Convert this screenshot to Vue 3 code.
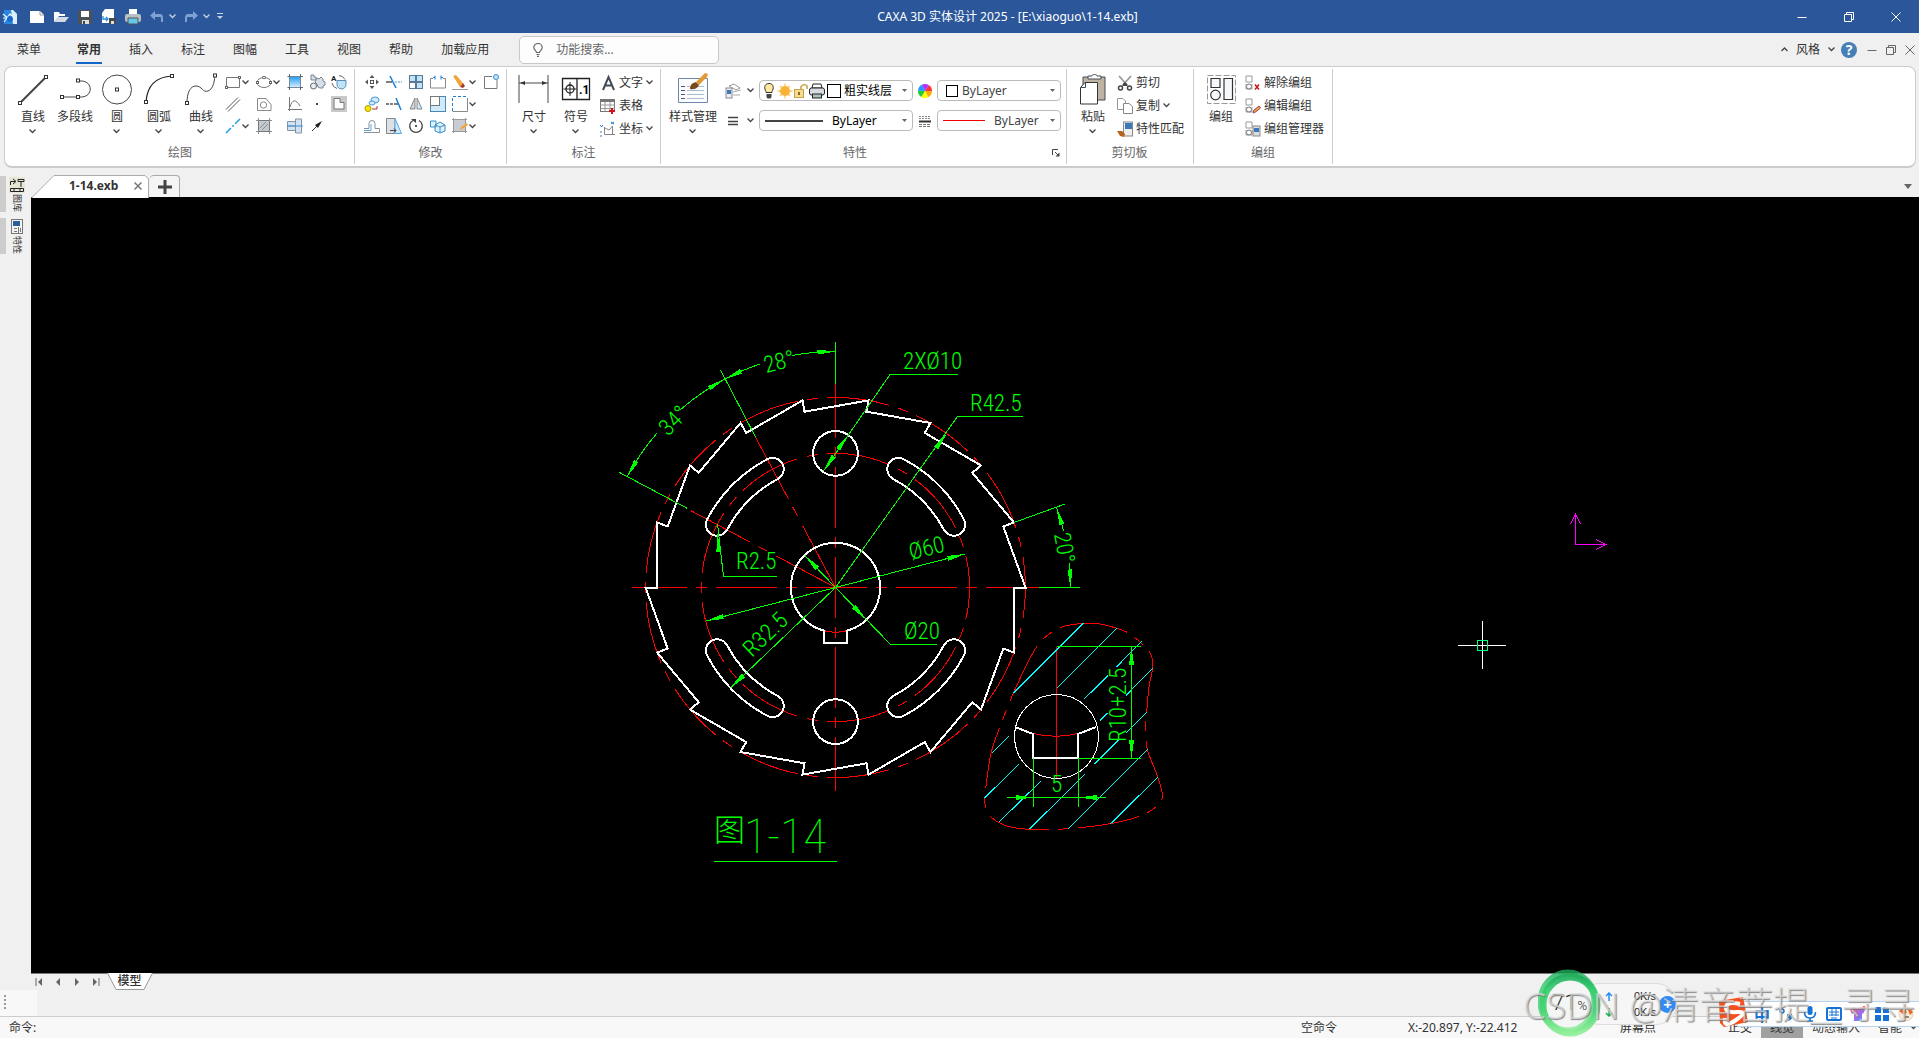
<script setup>
const menuTabs = ['插入', '标注', '图幅', '工具', '视图', '帮助', '加载应用']

const g = '#44474d'
const b = '#1e7fd6'
const sq = (x, y) => `<rect x="${x - 1.5}" y="${y - 1.5}" width="3" height="3" fill="#fff" stroke="#333" stroke-width="1"/>`
const nub = (x, y) => `<rect x="${x - 1}" y="${y - 1}" width="2" height="2" fill="#fff" stroke="#666" stroke-width="1"/>`
const s = (d, c = g, w = 1, f = 'none') => `<path d="${d}" fill="${f}" stroke="${c}" stroke-width="${w}"/>`
const dash = (p, d) => p.replace('/>', ` stroke-dasharray="${d}"/>`)

const big = {
  line: s('M4 30 30 4', '#444', 2) + sq(4, 30) + sq(30, 4),
  pline: s('M4 24H20M20 8H24C35 9 35 23 24 24H20') + sq(4, 24) + sq(20, 24) + sq(20, 7.5),
  circle: '<circle cx="17" cy="16.500" r="14.500" fill="none" stroke="#44474d"/>' + sq(17, 16.5),
  arc: s('M4 29C5 14 13 4 30 3', '#222', 1.2) + sq(4, 29) + sq(30, 3),
  curve: s('M3 30C3 20 6 13 12 13S19 20 24 18 30 10 31 3') + sq(3, 30) + sq(31, 2.5),
  dim: s('M2 2V30M31 2V30M2 10H31') + '<path d="M3 10l5-2v4zM30 10l-5-2v4z" fill="#333"/>',
  symbol: s('M3.500 5.500H30.500V26.500H3.500ZM18 5.500V26.500', '#222', 1.3) + '<circle cx="11" cy="16" r="4" fill="none" stroke="#222" stroke-width="1.3"/>' + s('M11 9V23M4.500 16H17.500', '#222') + '<text x="20" y="21" font-size="12" font-weight="700" font-family="Roboto">.1</text>',
  style: s('M2.500 5.500H31.500V29.500H2.500Z', '#6f87a8', 1, '#fbfcfe') + s('M5 13.500H9M5 17.500H9M5 21.500H9M5 25.500H9', '#557', 1) + s('M11 13.500H14M11 17.500H28M11 21.500H28M11 25.500H28M21 13.500H28', '#a9bccf', 1) + '<path d="M14 16c0-5 3-6 6-7l3 3c-2 4-5 5-9 4z" fill="#7a4a1e"/><path d="M20 9 29 0l3 1-1 3-8 8z" fill="#e39a33"/>',
  paste: '<path d="M7 4H29V27H7z" fill="#bfb3a4" stroke="#444b55"/><path d="M12 6V3h4c0-2 5-2 5 0h4v3z" fill="#fff" stroke="#444b55"/><path d="M9 9.500H21.500V31H4.500V14.500z" fill="#fff" stroke="#333"/>' + s('M9.500 10V14.500H5'),
  group: '<path d="M3.500 2.500H31.500V30.500H3.500Z" fill="none" stroke="#999" stroke-dasharray="6 2"/>' + s('M7 5.500H16V14.500H7ZM20 5.500H28.500V26.500H20Z', '#333', 1.2, '#f6f9fc') + '<circle cx="11.500" cy="22" r="4.800" fill="#f6f9fc" stroke="#333" stroke-width="1.200"/>'
}

const chip = `<path d="M1 1H7V7H1ZM1 9v5H7V9" fill="none" stroke="#999"/><circle cx="4" cy="11.500" r="2.500" fill="#fff" stroke="#777"/>`
const ic = {
  rect: s('M1.500 3.500H14.500V13.500H1.500Z', '#777') + nub(14.5, 3.5) + nub(1.5, 13.5),
  ellipse: '<ellipse cx="8" cy="8.500" rx="7" ry="5" fill="none" stroke="#777"/>' + nub(8, 3.5) + nub(1.5, 8.5) + nub(14.5, 8.5),
  fill: '<defs><linearGradient id="gf" x2="0" y2="1"><stop stop-color="#1f9bf0"/><stop offset="1" stop-color="#d8effd"/></linearGradient></defs><rect x="2.500" y="2.500" width="11" height="11" fill="url(#gf)" stroke="#789"/>' + s('M.5 2.500H3M13 2.500h3M.5 13.500H3M13 13.500h3M2.500 0V3M13.500 0V3M2.500 13v3M13.500 13v3', '#567'),
  gear: '<path d="M2 1h3v2h2v3H2zM8 4l2 1 2-2 2 2v2l2 1v3l-2 1v2h-3l-2-1-1-3-2-2z" fill="#d7e0ea" stroke="#7a8490"/><circle cx="4.500" cy="12" r="3" fill="#e6edf4" stroke="#666"/>',
  atext: '<text x="0" y="7" font-size="8" font-weight="700" font-family="Roboto" fill="#222">A</text><path d="M6 6.500h9v4a4.500 4.500 0 0 1-9 0z" fill="#bfe2f7" stroke="#5a8db5"/>' + s('M8 1.500A7 7 0 0 1 14 5.500M1 9A7 7 0 0 0 6 14.500', '#666'),
  parallel: s('M1 13.500 13 1.500M3 15.500 15 3.500', '#555'),
  hex: s('M1.500 2.500H10L15 8.500V14.500H1.500Z', '#888') + '<circle cx="7.500" cy="9" r="3.200" fill="none" stroke="#888"/>',
  func: s('M2.500 1V15M1 13.500H15M3 11C5 3 9 3 13 10', '#777'),
  dot: '<rect x="7" y="7" width="2" height="2" fill="#444"/>',
  cut: '<rect width="16" height="16" fill="#c9c9c9"/>' + s('M3 2.500H9V6.500H13V13H3Z', '#777', 1, '#fff'),
  cline: dash(s('M1 15 15 1', '#1f9fe0', 1.5), '7 2 2 2'),
  hatch: '<rect x="2.500" y="2.500" width="11" height="11" fill="#c4c9ce" stroke="#777"/>' + s('M0 2.500H3M13 2.500h3M0 13.500H3M13 13.500h3M2.500 0V3M13.500 0V3M2.500 13v3M13.500 13v3M4 10 10 4M6 12 12 6', '#8a8f95'),
  bolt: '<path d="M.5 3.500h8V8h-8zM8.500 1h6v14h-6zM.5 8v4.500h8V8" fill="#cfe3f4" stroke="#8793a0"/>' + s('M0 8H16', '#3b8fd0'),
  leader: s('M3 13 9 7', '#333') + '<path d="M13 3 6 7l3 3z" fill="#222"/>',
  move: '<path d="M8 1 10.500 4h-5zM8 15l2.500-3h-5zM1 8l3-2.500v5zM15 8l-3-2.500v5z" fill="#555"/><rect x="6.500" y="6.500" width="3" height="3" fill="#fff" stroke="#555"/>',
  trim: s('M4 2 10 14', b, 1.5) + s('M0 8H6', '#555', 1.5) + dash(s('M9 8h7', '#7bbce8', 1.5), '2 1'),
  array: '<rect x="1.500" y="1.500" width="6" height="6" fill="#bfe3fb" stroke="#5a7a96"/><rect x="8.500" y="1.500" width="6" height="6" fill="#bfe3fb" stroke="#5a7a96"/><rect x="1.500" y="8.500" width="6" height="6" fill="#fff" stroke="#5a7a96"/><rect x="8.500" y="8.500" width="6" height="6" fill="#bfe3fb" stroke="#5a7a96"/>',
  breakk: s('M3 4.500H.5V14H15.500V4.500H13', '#888') + s('M3 3.500h2M5 1.500v4M11 1.500v4M11 3.500h2', b),
  erase: '<path d="M1 2 4 1l7 8-3 4z" fill="#f0a43a"/><path d="M8 13l3-4 2 3-2 2z" fill="#a33c2e"/>' + s('M0 15.500H16', '#999'),
  corner: s('M9 2.500H1.500V14.500H14V6', '#777') + '<circle cx="13" cy="3" r="2.500" fill="#bfe3fb" stroke="#3a8fd0"/>',
  copy: '<ellipse cx="11" cy="4" rx="4" ry="3" fill="#cfeafc" stroke="#4a9ad0"/><ellipse cx="8" cy="7" rx="3" ry="2" fill="#cfeafc" stroke="#4a9ad0"/><circle cx="4" cy="12.500" r="3" fill="#ffe800" stroke="#a89a00"/>' + s('M8 13H13V10', '#a33', 1),
  extend: s('M0 8H3M4 8h3M8 8h4', '#555', 1.5) + s('M10 2 15 14', b, 1.5),
  mirror: '<path d="M7 2V13H2z" fill="#cfd4d9" stroke="#888"/><path d="M9 2V13h5z" fill="#cfeafc" stroke="#888"/>',
  scale: '<rect x=".5" y=".5" width="15" height="15" fill="#cfeafc" stroke="#4a88b8"/><rect x=".5" y=".5" width="9" height="9" fill="#fff" stroke="#777"/>',
  stretchbox: dash(s('M.5 15V.5H15', b), '3 2') + s('M15.500 2V15.500H.5', '#888'),
  offset: s('M0 14.500H15.500V10.500H11V5.500A3 3 0 0 0 5 5.500V10.500H0', '#8a919a') + s('M0 12.500H7V6', '#5aa7dd'),
  stretch: '<path d="M.5.5H9V15.500H.5z" fill="#dde1e5" stroke="#888"/><path d="M9 .5 15.500 15.500H9z" fill="#cfeafc" stroke="#5aa7dd"/>' + s('M4 12.500h6M8 10.500l2 2-2 2'),
  rotate: s('M5 2.500A6.300 6.300 0 1 0 11 2.500', '#444', 1.3) + '<path d="M3 1h5v4z" fill="#444"/><circle cx="8" cy="8" r="1" fill="#222"/>',
  blocks: '<path d="M.5 3H6V9H.5zM5 7l5-3 5 3v6l-5 2-5-2z" fill="#dff1fd" stroke="#3a8fc8"/>' + s('M5 7l5 2 5-2M10 9v6', '#3a8fc8'),
  hatchEdit: '<rect x="1.500" y="1.500" width="12" height="12" fill="#c9cdd2" stroke="#888"/>' + s('M0 1.500H15M0 13.500H15M1.500 0V15M13.500 0V15', '#999') + '<path d="M9 9l6-4 1 2-6 4-2 1z" fill="#f0a43a"/>',
  A: s('M3 15 8.500 2 14 15M5 10.500H12', '#444b57', 2),
  table: '<rect x=".5" y="1.500" width="14" height="12" fill="#fff" stroke="#777"/><rect x="0" y="1" width="15" height="3" fill="#777"/>' + s('M.5 7H15M.5 10.500H15M5 4V13.500M10 4V13.500', '#999') + s('M9 13h6M12 10v6', '#d0141e', 2),
  coord: s('M4.500 6v7.500H15M12.500 13V5L9 9 5 7', '#888') + s('M0 4l1.500 2L3 4M11 1l3 2M14 1l-3 2M1 10v2M1 14v2', b),
  matchc: '<rect x="6.500" y="1" width="9" height="14" fill="#eee" stroke="#888"/><rect x="8" y="2" width="7" height="6" fill="#3a7ab8"/><path d="M0 10l5 0 3 3-1 3-4-1z" fill="#b5651d"/>',
  scissors: s('M2 1 11 11M14 1 5 11', '#999', 1.8) + '<circle cx="3.500" cy="13" r="2" fill="none" stroke="#444" stroke-width="1.500"/><circle cx="12.500" cy="13" r="2" fill="none" stroke="#444" stroke-width="1.500"/><path d="M6 9l2-2 2 2v2H6z" fill="#444"/>',
  copydoc: s('M.5.5H6L8.500 3V11.500H.5Z', '#999', 1, '#fff') + s('M6.500 5.500H12L15.500 8.500V15.500H6.500Z', '#888', 1, '#fff'),
  ungroup: chip + s('M10 9.500l4 5M14 9.500l-4 5', '#c01818', 1.5),
  editgroup: chip + '<path d="M8 15l1-3 5-4 1.500 2-5 4z" fill="#f0a43a" stroke="#946"/>',
  groupmgr: chip + '<rect x="8" y="5" width="7" height="10" fill="#ddd" stroke="#888"/><rect x="9" y="7" width="5" height="4" fill="#3a7ab8"/>',
  layers: '<path d="M4 3l5-2 6 4-4 2z" fill="#fff" stroke="#999"/>' + s('M8 9l8-2M8 12h7', '#aaa') + '<rect x="1" y="5" width="6" height="10" fill="#eee" stroke="#889"/><rect x="2" y="7" width="4" height="4" fill="#3a7ab8"/>',
  lines: s('M3 4.500H13M3 8.500H13M3 11.500H13', '#444', 1.3),
  weights: dash(s('M2 3.500H14M2 5.500h12', '#888'), '2 1') + s('M2 8.500H14', '#333', 2) + dash(s('M2 11.500H14M2 13.500h12', '#777'), '3 1'),
  wheel: ['#f33', '#fa0', '#ff0', '#2c3', '#29f', '#a3f'].map((c, i) => {
    const p = a => `${(8 + 7 * Math.cos(a)).toFixed(2)} ${(8 + 7 * Math.sin(a)).toFixed(2)}`
    return `<path d="M8 8L${p(i * Math.PI / 3 - 1)}A7 7 0 0 1 ${p((i + 1) * Math.PI / 3 - 1)}Z" fill="${c}"/>`
  }).join(''),
  bulb: '<path d="M8 .500c5 0 5 5 3 8v1H5V8.500C3 5.500 3 .500 8 .500z" fill="#ffe9a0" stroke="#333"/><path d="M5.500 11h5v3l-1 1.500h-3l-1-1.500z" fill="#444"/>',
  sun: s('M8 .5v15M.5 8h15M3 3l10 10M13 3 3 13', '#f7c860', 1.3) + '<circle cx="8" cy="8" r="5" fill="#f9b233"/>',
  lock: s('M8 8V3.500Q11 0 14 3V6', '#d0b060', 1.8) + '<rect x="1.500" y="6.500" width="9" height="8" fill="#f3dc90" stroke="#c8a44a"/><rect x="5" y="9" width="2" height="3" fill="#8a6a20"/>',
  print: '<path d="M4 1h8l1 4H3z" fill="#fff" stroke="#222"/><rect x=".5" y="5" width="15" height="7" rx="2" fill="#d8dce0" stroke="#222"/><rect x="3.500" y="11" width="9" height="4" fill="#a8c0c4" stroke="#222"/>'
}

const quick = {
  app: '<path d="M2 1h9l4 4v10H2z" fill="#2a86e0"/><path d="M9 1h2l4 4v10h-4z" fill="#d9eefb"/>' + s('M1 5l8 7M2 13l6-8 5 5M1 9h10', '#e8f6ff', 1.2) + '<circle cx="8" cy="10" r="3" fill="#1668d0"/>',
  neu: '<path d="M1 2H11L15 6V14H1z" fill="#fff"/>' + s('M11 2V6H15', '#999'),
  open: '<path d="M1 3h5l1 2h5v2H6l-5 6z" fill="#fff"/><path d="M5 8H16l-4 5H1z" fill="#d3dae2"/>',
  save: '<path d="M1 1H15V15H1z" fill="#4c5358"/><path d="M4 2h8v6H4z" fill="#fff"/><path d="M5 11h7v4H5z" fill="#ddd"/><path d="M6 12h2v3H6z" fill="#444"/>',
  saveas: '<path d="M4 0h9v14H1V4z" fill="#fff"/><path d="M8 9h7v6H8z" fill="#444b50"/><path d="M10 12h3v3h-3z" fill="#ddd"/>' + s('M2 7v3h5M5 8l2 2-2 2', '#2b8fd8', 1.3),
  print: '<path d="M4 0h8v5H4z" fill="#fff"/><rect x="0" y="5" width="16" height="8" rx="2" fill="#b9c0c5"/><path d="M3 9h10v6H3z" fill="#62c8ec" stroke="#555"/>',
  undo: '<path d="M1 6.500 6 2v3h5q3 0 3 4v4h-2V9q0-1-1-1H6v3z" fill="#7ea0d3"/>',
  redo: '<path d="M15 6.500 10 2v3H5Q2 5 2 9v4h2V9q0-1 1-1h5v3z" fill="#7ea0d3"/>'
}

const bigDraw = [
  { t: '直线', i: 'line', m: 1 }, { t: '多段线', i: 'pline' }, { t: '圆', i: 'circle', m: 1 },
  { t: '圆弧', i: 'arc', m: 1 }, { t: '曲线', i: 'curve', m: 1 }
]
const smallDraw = [
  ['rect', 1], ['ellipse', 1], ['fill'], ['gear'], ['atext'],
  ['parallel'], ['hex'], ['func'], ['dot'], ['cut'],
  ['cline', 1], ['hatch'], ['bolt'], ['leader']
]
const smallEdit = [
  ['move'], ['trim'], ['array'], ['breakk'], ['erase', 1], ['corner'],
  ['copy'], ['extend'], ['mirror'], ['scale'], ['stretchbox', 1], null,
  ['offset'], ['stretch'], ['rotate'], ['blocks'], ['hatchEdit', 1]
]

/* ---- drawing geometry ---- */
const CX = 835.5
const CY = 587.5
const U = 4.47
const R = 42.5 * U
const rad = a => (a * Math.PI) / 180
const pol = (r, a, x = CX, y = CY) => [x + r * Math.cos(rad(a)), y + r * Math.sin(rad(a))]
const f = p => p.map(v => v.toFixed(1)).join(' ')

const ratchet = 'M' + Array.from({ length: 18 }, (_, k) => `${f(pol(R, k * 20))}L${f(pol(R * Math.cos(rad(20)), k * 20))}`).join('L') + 'Z'
const slot = a => {
  const o = 32.5 * U, n = 27.5 * U, e = 2.5 * U, z = a + 34
  return `M${f(pol(o, a))}A${o} ${o} 0 0 1 ${f(pol(o, z))}A${e} ${e} 0 0 1 ${f(pol(n, z))}A${n} ${n} 0 0 0 ${f(pol(n, a))}A${e} ${e} 0 0 1 ${f(pol(o, a))}Z`
}
const slots = [28, 118, 208, 298].map(slot).join('')
const keyHalf = 2.5 * U
const keyY = CY + Math.sqrt(100 * U * U - keyHalf * keyHalf)
const bore = `M${CX + keyHalf} ${keyY}A${10 * U} ${10 * U} 0 1 0 ${CX - keyHalf} ${keyY}V643H${CX + keyHalf}Z`
const keyArc = `M${CX + keyHalf} ${keyY}A${10 * U} ${10 * U} 0 0 1 ${CX - keyHalf} ${keyY}`
const arc = (r, a, z) => `M${f(pol(r, a))}A${r} ${r} 0 0 1 ${f(pol(r, z))}`
const dimArcs = [arc(236, -152, -139.2), arc(236, -131.1, -118), arc(236, -118, -108.7), arc(236, -100.6, -90), arc(235, -20, -13.9), arc(235, -5.9, 0)].join('')
const ray = (r, a) => `M${CX} ${CY}L${f(pol(r, a))}`

/* arrowhead with its tip at x,y pointing along angle a */
const arrow = ([x, y], a) => {
  const q = pol(18, a + 180, x, y)
  return `M${f([x, y])}L${f(pol(2.5, a + 90, ...q))}L${f(pol(2.5, a - 90, ...q))}Z`
}
const arrows = [
  arrow(pol(236, -90), -2), arrow(pol(236, -118), 154), arrow(pol(236, -118), -30), arrow(pol(236, -152), 120),
  arrow(pol(235, -20), -108), arrow(pol(235, 0), 88),
  arrow([848.5, 434.7], -55), arrow([823.5, 471], 125), arrow([946.7, 433.5], -54),
  arrow([717.5, 534], -94), arrow(pol(134, -14.5), -14.5), arrow(pol(134, 165.5), 165.5),
  arrow(pol(44.7, 46.2), 46.2), arrow(pol(44.7, 226.2), 226.2), arrow(pol(145.3, 136.3), 136.3),
  arrow([1131.5, 647], -90), arrow([1131.5, 758], 90), arrow([1033.5, 797.5], 0), arrow([1078.5, 797.5], 180)
].join('')

const rim = [[370, 430], [303, 442], [252, 475], [215, 525], [160, 640], [120, 740], [93, 820], [77, 925], [73, 957], [80, 990], [95, 1013], [140, 1038], [208, 1048], [325, 1046], [450, 1031], [540, 1008], [595, 975], [607, 945], [593, 890], [562, 808], [557, 740], [560, 697], [567, 620], [578, 565], [575, 530], [557, 502], [510, 462], [470, 445], [420, 432]]
  .map(([x, y]) => [960 + x / 3, 480 + y / 3])
const rimPath = rim.reduce((d, p, i) => {
  const n = rim.length
  const a = rim[(i + n - 1) % n], c = rim[(i + 1) % n], e = rim[(i + 2) % n]
  return d + `C${f([p[0] + (c[0] - a[0]) / 6, p[1] + (c[1] - a[1]) / 6])} ${f([c[0] - (e[0] - p[0]) / 6, c[1] - (e[1] - p[1]) / 6])} ${f(c)}`
}, 'M' + f(rim[0]))
const hatching = [[160, 640, 370, 430], [290, 625, 470, 445], [373, 657, 443, 587], [470, 560, 545, 484], [497, 647, 578, 565], [420, 722, 443, 698], [95, 820, 147, 768], [497, 760, 560, 697], [73, 955, 177, 852], [403, 853, 475, 781], [116, 1027, 242, 904], [208, 1048, 375, 882], [325, 1046, 563, 808], [450, 1033, 593, 892]]
  .map(([x, y, z, w]) => `M${f([960 + x / 3, 480 + y / 3])}L${f([960 + z / 3, 480 + w / 3])}`).join('')

const notes = [
  { t: '2XØ10', x: 903, y: 369 }, { t: 'R42.5', x: 970, y: 411 }, { t: 'R2.5', x: 736, y: 569 },
  { t: 'Ø20', x: 904, y: 639 }, { t: 'Ø60', x: 911, y: 560, r: -14 }, { t: 'R32.5', x: 752, y: 658, r: -44 },
  { t: '28°', x: 766, y: 373, r: -14 }, { t: '34°', x: 668, y: 437, r: -45 }, { t: '20°', x: 1054, y: 534, r: 80 },
  { t: 'R10+2.5', x: 1126, y: 742, r: -90 }, { t: '5', x: 1051, y: 792 }
]
</script>

<template>
  <div class="app">
    <header class="title">
      <div class="quick">
        <svg class="ic" viewBox="0 0 16 16" v-html="quick.app" />
        <button v-for="k in ['neu', 'open', 'save', 'saveas', 'print', 'undo']" :key="k" :aria-label="k"><svg class="ic" viewBox="0 0 16 16" v-html="quick[k]" /></button>
        <svg class="chev pale" viewBox="0 0 7 5"><path d="M.5.5 3.500 3.500 6.500.5" /></svg>
        <button aria-label="redo"><svg class="ic" viewBox="0 0 16 16" v-html="quick.redo" /></button>
        <svg class="chev pale" viewBox="0 0 7 5"><path d="M.5.5 3.500 3.500 6.500.5" /></svg>
        <svg class="more" viewBox="0 0 6 7"><path d="M0 .5H6" stroke="#c8d2e0" /><path d="M0 3H6L3 6z" fill="#c8d2e0" /></svg>
      </div>
      <h1>CAXA 3D 实体设计 2025 - [E:\xiaoguo\1-14.exb]</h1>
      <div class="win">
        <button aria-label="最小化"><svg viewBox="0 0 10 10"><path d="M.5 5.500H9.500" /></svg></button>
        <button aria-label="还原"><svg viewBox="0 0 10 10"><path d="M.5 2.500H7.500V9.500H.5ZM2.500 2V.5H9.500V7.500H8" /></svg></button>
        <button aria-label="关闭"><svg viewBox="0 0 10 10"><path d="M.5.5 9.500 9.500M9.500.5.5 9.500" /></svg></button>
      </div>
    </header>

    <nav class="tabs">
      <button class="tab menu">菜单</button>
      <button class="tab on"><span>常用</span></button>
      <button v-for="t in menuTabs" :key="t" class="tab">{{ t }}</button>
      <label class="search">
        <svg viewBox="0 0 10 14"><path d="M3.500 9.500C3.500 8 .8 7 .8 4.500a4.200 4 0 0 1 8.400 0C9.200 7 6.500 8 6.500 9.500ZM3.500 11.500h3M4 13.300h2" fill="none" stroke="#666" stroke-width="1.200" /></svg>
        <input type="text" placeholder="功能搜索..." aria-label="功能搜索">
      </label>
      <div class="tools">
        <svg class="chev up" viewBox="0 0 7 5"><path d="M.5 4 3.500 1 6.500 4" /></svg>
        <button>风格</button>
        <svg class="chev" viewBox="0 0 7 5"><path d="M.5.5 3.500 3.500 6.500.5" /></svg>
        <button class="help" aria-label="帮助">?</button>
        <button class="mdi" aria-label="最小化文档"><svg viewBox="0 0 10 10"><path d="M.5 5.500H9.500" /></svg></button>
        <button class="mdi" aria-label="还原文档"><svg viewBox="0 0 10 10"><path d="M.5 2.500H7.500V9.500H.5ZM2.500 2V.5H9.500V7.500H8" /></svg></button>
        <button class="mdi" aria-label="关闭文档"><svg viewBox="0 0 10 10"><path d="M.5.5 9.500 9.500M9.500.5.5 9.500" /></svg></button>
      </div>
    </nav>

    <section class="ribbon">
      <div class="group g1">
        <div class="body">
          <button v-for="x in bigDraw" :key="x.t" class="big">
            <svg class="bic" viewBox="0 0 34 34" v-html="big[x.i]" /><span>{{ x.t }}</span>
            <svg v-if="x.m" class="chev" viewBox="0 0 7 5"><path d="M.5.5 3.500 3.500 6.500.5" /></svg>
          </button>
          <div class="grid draw">
            <button v-for="x in smallDraw" :key="x[0]" class="small" :aria-label="x[0]">
              <svg class="ic" viewBox="0 0 16 16" v-html="ic[x[0]]" />
              <svg v-if="x[1]" class="chev" viewBox="0 0 7 5"><path d="M.5.5 3.500 3.500 6.500.5" /></svg>
            </button>
          </div>
        </div>
        <div class="cap"><span>绘图</span></div>
      </div>

      <div class="group g2">
        <div class="body">
          <div class="grid edit">
            <template v-for="(x, i) in smallEdit" :key="i">
              <i v-if="!x" />
              <button v-else class="small" :aria-label="x[0]">
                <svg class="ic" viewBox="0 0 16 16" v-html="ic[x[0]]" />
                <svg v-if="x[1]" class="chev" viewBox="0 0 7 5"><path d="M.5.5 3.500 3.500 6.500.5" /></svg>
              </button>
            </template>
          </div>
        </div>
        <div class="cap"><span>修改</span></div>
      </div>

      <div class="group g3">
        <div class="body">
          <button v-for="x in [['尺寸', 'dim'], ['符号', 'symbol']]" :key="x[0]" class="big">
            <svg class="bic" viewBox="0 0 34 34" v-html="big[x[1]]" /><span>{{ x[0] }}</span>
            <svg class="chev" viewBox="0 0 7 5"><path d="M.5.5 3.500 3.500 6.500.5" /></svg>
          </button>
          <div class="rows">
            <button v-for="x in [['文字', 'A', 1], ['表格', 'table'], ['坐标', 'coord', 1]]" :key="x[0]">
              <svg class="ic" viewBox="0 0 16 16" v-html="ic[x[1]]" />{{ x[0] }}
              <svg v-if="x[2]" class="chev" viewBox="0 0 7 5"><path d="M.5.5 3.500 3.500 6.500.5" /></svg>
            </button>
          </div>
        </div>
        <div class="cap"><span>标注</span></div>
      </div>

      <div class="group g4">
        <div class="body">
          <button class="big wide">
            <svg class="bic" viewBox="0 0 34 34" v-html="big.style" /><span>样式管理</span>
            <svg class="chev" viewBox="0 0 7 5"><path d="M.5.5 3.500 3.500 6.500.5" /></svg>
          </button>
          <div class="props">
            <div class="prow">
              <button class="pick" aria-label="图层"><svg class="ic" viewBox="0 0 16 16" v-html="ic.layers" /><svg class="chev" viewBox="0 0 7 5"><path d="M.5.5 3.500 3.500 6.500.5" /></svg></button>
              <div class="combo c1">
                <svg v-for="k in ['bulb', 'sun', 'lock', 'print']" :key="k" class="ic" viewBox="0 0 16 16" v-html="ic[k]" />
                <i class="box" />
                <select class="dark" aria-label="当前图层"><option>粗实线层</option></select>
                <svg class="tri" viewBox="0 0 5 3"><path d="M0 0H5L2.500 3z" /></svg>
              </div>
              <svg class="ic" viewBox="0 0 16 16" v-html="ic.wheel" />
              <div class="combo c2">
                <i class="box s" />
                <select aria-label="颜色"><option>ByLayer</option></select>
                <svg class="tri" viewBox="0 0 5 3"><path d="M0 0H5L2.500 3z" /></svg>
              </div>
            </div>
            <div class="prow">
              <button class="pick" aria-label="线宽"><svg class="ic" viewBox="0 0 16 16" v-html="ic.lines" /><svg class="chev" viewBox="0 0 7 5"><path d="M.5.5 3.500 3.500 6.500.5" /></svg></button>
              <div class="combo c1">
                <i class="ln" />
                <select class="dark" aria-label="线宽选择"><option>ByLayer</option></select>
                <svg class="tri" viewBox="0 0 5 3"><path d="M0 0H5L2.500 3z" /></svg>
              </div>
              <svg class="ic" viewBox="0 0 16 16" v-html="ic.weights" />
              <div class="combo c2">
                <i class="ln red" />
                <select aria-label="线型"><option>ByLayer</option></select>
                <svg class="tri" viewBox="0 0 5 3"><path d="M0 0H5L2.500 3z" /></svg>
              </div>
            </div>
          </div>
        </div>
        <div class="cap">
          <span>特性</span>
          <button class="launch" aria-label="特性选项"><svg viewBox="0 0 8 8"><path d="M.5 6V.5H6M3 3l4 4" fill="none" stroke="#444" /><path d="M7.500 3.500v4h-4z" fill="#444" /></svg></button>
        </div>
      </div>

      <div class="group g5">
        <div class="body">
          <button class="big">
            <svg class="bic" viewBox="0 0 34 34" v-html="big.paste" /><span>粘贴</span>
            <svg class="chev" viewBox="0 0 7 5"><path d="M.5.5 3.500 3.500 6.500.5" /></svg>
          </button>
          <div class="rows">
            <button v-for="x in [['剪切', 'scissors'], ['复制', 'copydoc', 1], ['特性匹配', 'matchc']]" :key="x[0]">
              <svg class="ic" viewBox="0 0 16 16" v-html="ic[x[1]]" />{{ x[0] }}
              <svg v-if="x[2]" class="chev" viewBox="0 0 7 5"><path d="M.5.5 3.500 3.500 6.500.5" /></svg>
            </button>
          </div>
        </div>
        <div class="cap"><span>剪切板</span></div>
      </div>

      <div class="group g6">
        <div class="body">
          <button class="big"><svg class="bic" viewBox="0 0 34 34" v-html="big.group" /><span>编组</span></button>
          <div class="rows">
            <button v-for="x in [['解除编组', 'ungroup'], ['编辑编组', 'editgroup'], ['编组管理器', 'groupmgr']]" :key="x[0]">
              <svg class="ic" viewBox="0 0 16 16" v-html="ic[x[1]]" />{{ x[0] }}
            </button>
          </div>
        </div>
        <div class="cap"><span>编组</span></div>
      </div>
    </section>

    <main class="work">
      <aside class="dock">
        <button>
          <svg viewBox="0 0 16 16"><rect width="16" height="16" fill="#e6e6d2" /><path d="M1.500 8V4.500H6M4 2l3 2.500-3 2.500M9 2.500h6v2H9zM12 5v5M1.500 11.500h13v3h-13zM4 13h2M10 13h2" fill="none" stroke="#222" /></svg>
          <span>图库</span>
        </button>
        <button>
          <svg viewBox="0 0 16 16"><rect x="2.500" y=".5" width="11" height="14" fill="#f4f4f4" stroke="#777" /><rect x="4" y="2" width="7" height="5" fill="#2a6099" /><path d="M5 9.500h3M5 12.500h3M9.500 8v6M11.500 9v4" stroke="#777" /></svg>
          <span>特性</span>
        </button>
      </aside>

      <div class="stage">
        <div class="docs">
          <div class="doc">
            <svg viewBox="0 0 118 23"><path d="M.5 23 23 .5H114L117.500 4V23" fill="#fff" stroke="#aaa" /></svg>
            <button class="name">1-14.exb</button>
            <button class="x" aria-label="关闭"><svg viewBox="0 0 8 8"><path d="M.5.5 7.500 7.500M7.500.5.5 7.500" stroke="#777" stroke-width="1.500" /></svg></button>
          </div>
          <button class="add" aria-label="新建"><svg viewBox="0 0 14 14"><path d="M7 0V14M0 7H14" stroke="#444" stroke-width="3" /></svg></button>
          <button class="list" aria-label="文档列表"><svg viewBox="0 0 8 5"><path d="M0 0H8L4 5z" fill="#666" /></svg></button>
        </div>

        <svg class="canvas" viewBox="31 197 1888 776" preserveAspectRatio="xMinYMin meet">
          <g class="red">
            <path d="M632 587.500H1040" stroke-dasharray="61 9 11 9" stroke-dashoffset="6.500" />
            <path d="M835.500 384V791" stroke-dasharray="61 9 11 9" stroke-dashoffset="7" />
            <circle :cx="CX" :cy="CY" :r="R" pathLength="1170" stroke-dasharray="61 9 11 9" stroke-dashoffset="30.500" />
            <circle :cx="CX" :cy="CY" :r="30 * U" pathLength="810" stroke-dasharray="61 9 11 9" stroke-dashoffset="30.500" />
            <path :d="ray(171, -118)" stroke-dasharray="70 11 10 9" />
            <path :d="ray(167, -152)" stroke-dasharray="67 11 10 9" />
            <path :d="keyArc" />
            <path :d="rimPath" stroke-dasharray="62 9 11 9" stroke-dashoffset="38" />
            <path d="M1056.500 647V778M1033 733.500Q1056 739 1078 733.500" />
          </g>
          <path class="cyan" :d="hatching" />
          <g class="white">
            <path :d="ratchet" /><path :d="slots" /><path :d="bore" />
            <circle :cx="CX" :cy="CY - 30 * U" :r="5 * U" /><circle :cx="CX" :cy="CY + 30 * U" :r="5 * U" />
            <path d="M1015 727 1033 734V758H1078V734L1096 727" />
          </g>
          <circle class="thin" cx="1056.500" cy="736.500" r="42" />
          <g class="green">
            <path :d="dimArcs" />
            <path d="M835.500 342V384M720.500 370 755.500 437M619.500 472.500 687.500 508.500" />
            <path d="M823.500 471 890 374.500H958M835.500 587.500 957.500 416.500H1023M717.500 524 723.500 576.500H777" />
            <path :d="ray(134, -14.5) + ray(134, 165.5) + ray(44, 226.2) + ray(145, 136.3)" />
            <path d="M835.500 587.500 890.500 644.500H937" />
            <path d="M1014 522.500 1065 504M1039 587.500H1080" />
            <path d="M1056.500 646.500H1141M1131.500 646.500V758.500M1078 758.500H1141M1033.500 758V807M1078.500 758V807M1007 797.500H1106" />
            <path d="M714 861.500H837" />
            <path class="solid" :d="arrows" />
          </g>
          <g class="note">
            <text v-for="n in notes" :key="n.t" :x="n.x" :y="n.y" :transform="n.r ? `rotate(${n.r} ${n.x} ${n.y})` : null">{{ n.t }}</text>
            <text class="fig" x="714" y="841">图</text>
            <text class="num" x="744" y="853">1-14</text>
          </g>
          <path class="ucs" d="M1575.500 514.500V544.500H1606M1570.500 524 1575.500 514 1580.500 524M1596 539.500 1606 544.500 1596 549.500" />
          <path class="thin" d="M1482.500 621V669M1458 645.500H1506" />
          <path class="pickbox" d="M1477.500 640.500H1487.500V650.500H1477.500Z" />
        </svg>

        <div class="sheets">
          <button aria-label="首页"><svg viewBox="0 0 8 8"><path d="M1 0V8" stroke="#666" /><path d="M7 0V8L3 4z" fill="#666" /></svg></button>
          <button aria-label="上一页"><svg viewBox="0 0 8 8"><path d="M6 0V8L2 4z" fill="#666" /></svg></button>
          <button aria-label="下一页"><svg viewBox="0 0 8 8"><path d="M2 0V8L6 4z" fill="#666" /></svg></button>
          <button aria-label="末页"><svg viewBox="0 0 8 8"><path d="M7 0V8" stroke="#666" /><path d="M1 0V8L5 4z" fill="#666" /></svg></button>
          <button class="sheet"><svg viewBox="0 0 46 17"><path d="M.5 0 9 16.500H37L45.500 0" fill="#fff" stroke="#999" /></svg><span>模型</span></button>
        </div>
      </div>
    </main>

    <div class="cmdbar"><div class="grip"><i /><i /><i /><i /></div></div>

    <footer class="status">
      <span class="cmd">命令:</span>
      <span class="s1">空命令</span>
      <span class="s2">X:-20.897, Y:-22.412</span>
      <span class="s3">屏幕点</span>
      <button class="s4">正交</button>
      <button class="s5">线宽</button>
      <button class="s6">动态输入</button>
      <button class="s7">智能 <svg class="chev" viewBox="0 0 7 5"><path d="M.5.5 3.500 3.500 6.500.5" /></svg></button>
    </footer>

    <div class="float">
      <div class="net">
        <div class="speeds">
          <p><svg viewBox="0 0 8 9"><path d="M4 9V1M1 4 4 1 7 4" fill="none" stroke="#2f8bf5" stroke-width="1.500" /></svg><span>0K/s</span></p>
          <p><svg viewBox="0 0 8 9"><path d="M4 0V8M1 5 4 8 7 5" fill="none" stroke="#1fb141" stroke-width="1.500" /></svg><span>0K/s</span></p>
        </div>
        <b>+</b>
      </div>
      <svg class="ring" viewBox="0 0 64 70">
        <defs><linearGradient id="rg" x2="0" y2="1"><stop stop-color="#1fae5c" /><stop offset=".25" stop-color="#35cf6d" /><stop offset=".6" stop-color="#48d373" /><stop offset="1" stop-color="#90ef98" /></linearGradient></defs>
        <ellipse cx="31" cy="36" rx="26" ry="27" fill="#f4f6f5" />
        <ellipse cx="30" cy="34" rx="27" ry="29" fill="none" stroke="url(#rg)" stroke-width="7" opacity=".8" />
        <ellipse cx="32" cy="37" rx="27" ry="28" fill="none" stroke="url(#rg)" stroke-width="7" opacity=".9" />
      </svg>
      <div class="pct">71<small>%</small></div>
      <div class="ime">
        <b>中</b>
        <svg viewBox="0 0 16 16"><circle cx="4" cy="5" r="2" fill="none" stroke="#1672d4" stroke-width="1.500" /><path d="M9 8h5v3q0 3-4 4 2-2 1-3H9z" fill="#1672d4" /></svg>
        <svg viewBox="0 0 16 16"><rect x="5.500" y="0" width="5" height="9" rx="2.500" fill="#1672d4" /><path d="M2.500 6Q2.500 12 8 12T13.500 6M8 12v3M5 15h6" fill="none" stroke="#1672d4" stroke-width="1.500" /></svg>
        <svg viewBox="0 0 16 16"><rect x="1" y="2" width="14" height="12" rx="1" fill="none" stroke="#1672d4" stroke-width="2" /><path d="M3 6h10M3 9h10M5 12h6M6 3v7M10 3v7" stroke="#1672d4" /></svg>
        <svg viewBox="0 0 16 16"><defs><linearGradient id="sh" x2="1" y2="1"><stop stop-color="#ff5a6a" /><stop offset=".6" stop-color="#9a6cf0" /><stop offset="1" stop-color="#39b6ff" /></linearGradient></defs><path d="M0 4l4-3q3 3 7 0l4 3-2 4-1-1v8H4V7L2 8z" fill="url(#sh)" /><circle cx="14" cy="1.500" r="1.500" fill="#f33" /></svg>
        <svg viewBox="0 0 16 16"><path d="M1 1h6v6H1zM9 1l6 1v5H9zM1 9h6v6H1zM9 9h6v6H9z" fill="#1672d4" /></svg>
        <svg viewBox="0 0 16 16"><circle cx="8" cy="8" r="7" fill="#fbe9d8" stroke="#e8d0b8" /><path d="M1 5q5-4 8 1l-3 3zM10 4q3-1 5 2l-3 3z" fill="#e86a1e" /><path d="M6 11h5" stroke="#333" /></svg>
      </div>
      <svg class="sogou" viewBox="0 0 32 30"><path d="M3 4 27 0 32 25 8 30 4 26z" fill="#f4511e" /><path d="M24 7Q11 4 10 10T21 15 20 23 9 21" fill="none" stroke="#fff" stroke-width="4" /></svg>
      <div class="mark">CSDN @清音菩提__寻寻</div>
    </div>
  </div>
</template>

<style>
body { margin: 0; background: #f0f0f0; }
</style>

<style scoped>
.app { position: relative; display: flex; flex-direction: column; min-height: 100vh; overflow: hidden; background: #f0f0f0; color: #333; font: 12px/16px "Noto Sans", "Noto Sans CJK SC", sans-serif; }
* { box-sizing: border-box; }
button { display: flex; align-items: center; justify-content: center; padding: 0; border: 0; background: none; color: inherit; font: inherit; white-space: nowrap; }
svg { flex: none; display: block; }
.ic { width: 16px; height: 16px; overflow: visible; }
.chev { width: 7px; height: 5px; }
.chev path { fill: none; stroke: #444; stroke-width: 1.3; }
.chev.pale path { stroke: #c8d2e0; }

.title { display: flex; align-items: center; justify-content: space-between; height: 33px; background: #2b579a; color: #fff; }
.quick { display: flex; align-items: center; flex: 1; gap: 8px; padding-left: 2px; height: 28px; }
.quick > .ic { margin-right: 3px; }
.quick .chev { margin: 0 -1px 0 -4px; }
.more { width: 6px; height: 7px; }
h1 { margin: 0; font: inherit; padding-left: 94px; }
.win { display: flex; flex: 1; justify-content: flex-end; }
.win button { width: 47px; height: 33px; }
.win svg, .mdi svg { width: 10px; height: 10px; fill: none; stroke: #fff; }

.tabs { display: flex; align-items: center; height: 33px; padding: 0 4px 0 3px; }
.tab { height: 33px; padding: 0 14px; }
.menu { margin-right: 8px; }
.on { font-weight: 700; }
.on span { margin: 2px -1px 0; padding: 4px 1px; border-bottom: 2px solid #1066c8; }
.search { display: flex; align-items: center; width: 200px; height: 28px; margin-left: 16px; padding-left: 13px; gap: 13px; border: 1px solid #c8c8c8; border-radius: 5px; background: #fdfdfd; }
.search svg { width: 10px; height: 14px; }
.search input { flex: 1; min-width: 0; padding: 0; border: 0; outline: 0; background: none; font: inherit; color: #555; }
.search input::placeholder { color: #666; opacity: 1; }
.tools { display: flex; align-items: center; margin-left: auto; gap: 8px; }
.tools .help { width: 16px; height: 16px; border-radius: 8px; background: #4580b8; color: #fff; font-weight: 700; font-size: 14px; margin: 0 1px 0 -2px; }
.mdi { width: 11px; height: 16px; }
.mdi svg { stroke: #666; }

.ribbon { display: flex; height: 102px; margin: 0 3px 0 4px; padding-top: 2px; border: 1px solid #ccc; border-bottom: 2px solid #ccc; border-radius: 8px; background: #fff; }
.group { display: flex; flex-direction: column; height: 95px; padding: 2px 0 0 5px; border-right: 1px solid #ccc; }
.g1 { width: 350px; padding-left: 7px; }
.g2 { width: 152px; padding-left: 6px; }
.g3 { width: 154px; padding-left: 6px; }
.g4 { width: 406px; padding-left: 1px; }
.g5 { width: 127px; padding-left: 5px; }
.g6 { width: 139px; padding-left: 6px; }
.body { display: flex; height: 74px; }
.cap { display: flex; align-items: center; justify-content: center; height: 16px; color: #666; }
.cap span { flex: 1; text-align: center; padding-right: 6px; }
.g4 .cap span { padding-right: 0; }
.launch { width: 16px; height: 16px; margin-right: 2px; }
.launch svg { width: 8px; height: 8px; }
.big { flex-direction: column; justify-content: flex-start; width: 42px; padding-top: 2px; }
.big.wide { width: 62px; }
.bic { width: 34px; height: 34px; }
.big span { margin: 2px 0 4px; }
.big .chev { margin-right: 2px; }
.grid { display: grid; grid-auto-rows: 22px; align-content: start; }
.draw { grid-template-columns: 31px 31px 22px 22px 22px; }
.edit { grid-template-columns: 22px 22px 22px 22px 31px 22px; }
.small { justify-content: flex-start; padding-left: 3px; gap: 1px; }
.rows { display: flex; flex-direction: column; }
.rows button { justify-content: flex-start; height: 23px; padding-left: 3px; gap: 3px; }
.props { display: flex; flex-direction: column; gap: 9px; padding-top: 9px; }
.prow { display: flex; align-items: center; gap: 4px; }
.pick { width: 31px; gap: 6px; }
.combo { display: flex; align-items: center; height: 21px; border: 1px solid #bbb; border-radius: 4px; background: #fff; }
.c1 { width: 154px; padding: 0 5px 0 1px; }
.c2 { width: 124px; padding: 0 5px 0 8px; }
.box { width: 14px; height: 14px; margin: 0 3px 0 2px; border: 1px solid #000; background: #fff; }
.box.s { width: 12px; height: 12px; margin: 0 4px 0 0; }
.ln { width: 58px; height: 2px; margin: 0 9px 0 4px; background: #444; }
.ln.red { width: 42px; height: 1px; margin: 0 9px 0 -3px; background: #e00; }
select { flex: 1; min-width: 0; padding: 0; border: 0; outline: 0; appearance: none; background: none; font: inherit; color: #444; }
select.dark { color: #000; }
.tri { width: 5px; height: 3px; fill: #666; }

.work { display: flex; flex: 1; }
.dock { display: flex; flex-direction: column; gap: 6px; width: 31px; padding-top: 8px; }
.dock button { flex-direction: column; justify-content: flex-start; width: 27px; height: 36px; padding: 1px 0 0 1px; border-left: 6px solid #ccc; gap: 1px; }
.dock svg { width: 16px; height: 16px; }
.dock span { writing-mode: vertical-rl; text-orientation: sideways; font-size: 9px; line-height: 10px; }
.stage { display: flex; flex: 1; flex-direction: column; min-width: 0; }
.docs { display: flex; align-items: flex-end; height: 29px; }
.doc { position: relative; display: flex; align-items: center; width: 118px; height: 22px; padding-left: 38px; }
.doc > svg { position: absolute; left: 0; top: 0; width: 118px; height: 23px; }
.name, .x { position: relative; font-weight: 700; }
.x { margin-left: auto; margin-right: 7px; }
.x svg { width: 8px; height: 8px; }
.add { width: 30px; height: 22px; margin-left: 1px; border: 1px solid #aaa; border-bottom: 0; border-left: 0; border-radius: 4px 4px 0 0; background: #f5f5f5; }
.add svg { width: 14px; height: 14px; }
.list { margin: 0 7px 8px auto; }
.list svg { width: 8px; height: 5px; }

.canvas { flex: 1; width: 100%; min-height: 0; background: #000; shape-rendering: crispEdges; }
.canvas path, .canvas circle { fill: none; stroke-width: 1; }
.red > * { stroke: #f00; }
.white > * { stroke: #fff; }
.canvas .white > * { stroke-width: 2; }
.green > * { stroke: #0f0; }
.canvas .solid { fill: #0f0; stroke: none; }
.cyan { stroke: #0ff; }
.thin { stroke: #fff; }
.ucs { stroke: #f0f; }
.pickbox { stroke: #00ff80; }
.note { fill: #0f0; font: 300 23px "Roboto Condensed", "Roboto", sans-serif; }
.fig { font: 300 31px "Noto Sans CJK SC", sans-serif; }
.num { font-size: 48px; font-weight: 100; }

.sheets { display: flex; height: 17px; padding-right: 0; border-top: 1px solid #777; }
.sheets button { width: 19px; height: 16px; padding-right: 4px; }
.sheets button > svg { width: 8px; height: 8px; }
.sheets .sheet { position: relative; width: 46px; margin-top: -1px; padding: 0 0 0 1px; }
.sheets .sheet svg { position: absolute; left: 0; top: 0; width: 46px; height: 17px; }
.sheet span { position: relative; font-weight: 500; padding-right: 2px; }

.cmdbar { height: 26px; }
.grip { display: flex; flex-direction: column; gap: 2px; width: 37px; height: 26px; padding: 5px 4px; background: #f8f8f8; }
.grip i { width: 2px; height: 2px; background: #999; }
.status { display: flex; align-items: center; height: 22px; border-top: 1px solid #ccc; background: #f8f8f8; }
.status > * { flex: none; white-space: nowrap; justify-content: flex-start; }
.status .cmd { flex: 1; padding-left: 9px; }
.s1 { width: 107px; }
.s2 { width: 212px; }
.s3 { width: 98px; }
.s4 { width: 43px; padding-left: 10px; }
.s5 { width: 42px; height: 21px; padding-left: 9px; background: #a0a0a0; }
.s6 { width: 67px; padding-left: 9px; }
.s7 { width: 49px; padding-left: 8px; gap: 8px; }

.float { position: absolute; right: 0; bottom: 0; width: 410px; height: 70px; }
.ring { position: absolute; left: 29px; top: 0; width: 64px; height: 70px; }
.pct { position: absolute; left: 43px; top: 23px; font: 300 22px/24px Roboto, sans-serif; color: #222; }
.pct small { font-size: 13px; margin-left: 1px; }
.net { position: absolute; left: 70px; top: 15px; display: flex; align-items: center; width: 98px; height: 42px; border: 1px solid #ddd; border-radius: 21px; background: #f6f6f6; }
.speeds { width: 76px; padding-left: 25px; }
.speeds p { display: flex; align-items: center; justify-content: space-between; margin: 0; font: 11px/16px "Liberation Sans", sans-serif; color: #222; }
.speeds svg { width: 8px; height: 9px; }
.net b { margin-left: 3px; width: 17px; height: 17px; border-radius: 9px; background: #2f8bf5; color: #fff; font-size: 15px; line-height: 16px; text-align: center; }
.ime { position: absolute; left: 228px; top: 33px; display: flex; align-items: center; gap: 8px; width: 184px; height: 26px; padding-left: 16px; border: 1px solid #b5d2ee; background: #fff; color: #1672d4; }
.ime b { font: 700 16px/20px "Noto Sans CJK SC", sans-serif; }
.ime svg { width: 16px; height: 16px; }
.sogou { position: absolute; left: 207px; top: 29px; width: 32px; height: 30px; }
.mark { position: absolute; right: 4px; top: 16px; font: 300 37px/42px "Noto Sans", "Noto Sans CJK SC", sans-serif; color: rgba(225, 225, 225, .7); text-shadow: 1px 1px 1px rgba(110, 110, 110, .8); white-space: nowrap; }
</style>
